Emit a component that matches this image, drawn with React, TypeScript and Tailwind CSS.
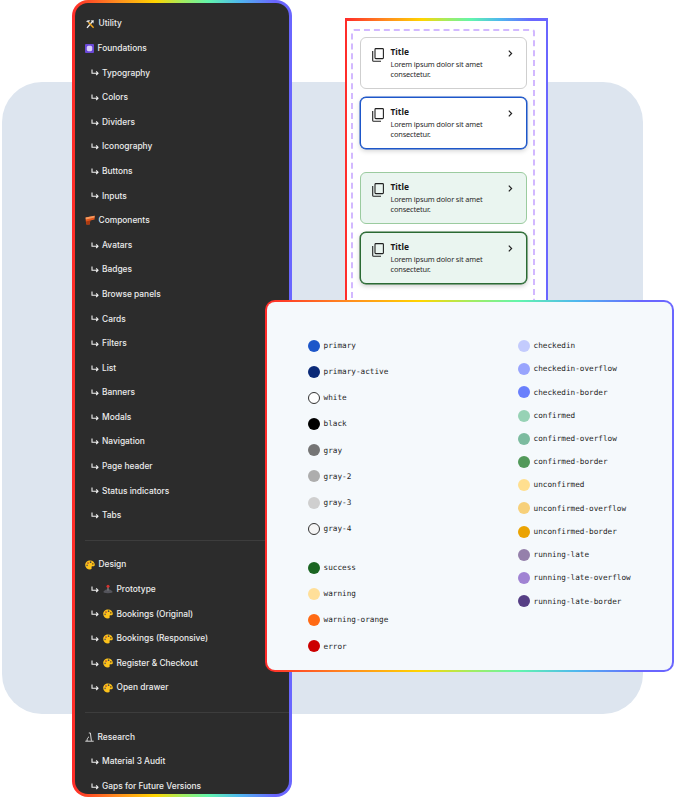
const rainbow = 'bg-[linear-gradient(90deg,#ff2a2a_0%,#ff8a1f_20%,#ffd500_38%,#a5ec5e_50%,#62f5ad_62%,#4fb8ee_76%,#6a66ff_92%,#6a66ff_100%)]';

type Item = { label: string; icon?: 'tools' | 'square' | 'brick' | 'palette' | 'joystick' | 'research'; child?: boolean } | { divider: true };

const items: Item[] = [
  { label: 'Utility', icon: 'tools' },
  { label: 'Foundations', icon: 'square' },
  { label: 'Typography', child: true },
  { label: 'Colors', child: true },
  { label: 'Dividers', child: true },
  { label: 'Iconography', child: true },
  { label: 'Buttons', child: true },
  { label: 'Inputs', child: true },
  { label: 'Components', icon: 'brick' },
  { label: 'Avatars', child: true },
  { label: 'Badges', child: true },
  { label: 'Browse panels', child: true },
  { label: 'Cards', child: true },
  { label: 'Filters', child: true },
  { label: 'List', child: true },
  { label: 'Banners', child: true },
  { label: 'Modals', child: true },
  { label: 'Navigation', child: true },
  { label: 'Page header', child: true },
  { label: 'Status indicators', child: true },
  { label: 'Tabs', child: true },
  { divider: true },
  { label: 'Design', icon: 'palette' },
  { label: 'Prototype', icon: 'joystick', child: true },
  { label: 'Bookings (Original)', icon: 'palette', child: true },
  { label: 'Bookings (Responsive)', icon: 'palette', child: true },
  { label: 'Register & Checkout', icon: 'palette', child: true },
  { label: 'Open drawer', icon: 'palette', child: true },
  { divider: true },
  { label: 'Research', icon: 'research' },
  { label: 'Material 3 Audit', child: true },
  { label: 'Gaps for Future Versions', child: true },
];

const leftColors = [
  { name: 'primary', color: 'bg-[#1d56c9]' },
  { name: 'primary-active', color: 'bg-[#0b2a78]' },
  { name: 'white', color: 'bg-white border border-[#333]' },
  { name: 'black', color: 'bg-black' },
  { name: 'gray', color: 'bg-[#757575]' },
  { name: 'gray-2', color: 'bg-[#adadad]' },
  { name: 'gray-3', color: 'bg-[#cfcfcf]' },
  { name: 'gray-4', color: 'bg-[#f5f5f5] border border-[#333]' },
];

const statusColors = [
  { name: 'success', color: 'bg-[#1b6522]' },
  { name: 'warning', color: 'bg-[#ffdf99]' },
  { name: 'warning-orange', color: 'bg-[#ff6a14]' },
  { name: 'error', color: 'bg-[#cc0000]' },
];

const rightColors = [
  { name: 'checkedin', color: 'bg-[#c3cbfd]' },
  { name: 'checkedin-overflow', color: 'bg-[#98a4fd]' },
  { name: 'checkedin-border', color: 'bg-[#697ffc]' },
  { name: 'confirmed', color: 'bg-[#97d2b5]' },
  { name: 'confirmed-overflow', color: 'bg-[#7cbb9f]' },
  { name: 'confirmed-border', color: 'bg-[#52995a]' },
  { name: 'unconfirmed', color: 'bg-[#ffdf8f]' },
  { name: 'unconfirmed-overflow', color: 'bg-[#f7d07a]' },
  { name: 'unconfirmed-border', color: 'bg-[#eba302]' },
  { name: 'running-late', color: 'bg-[#9580ab]' },
  { name: 'running-late-overflow', color: 'bg-[#a083d3]' },
  { name: 'running-late-border', color: 'bg-[#563f85]' },
];

function Arrow() {
  return (
    <svg width="8" height="7" viewBox="0 0 8 7" fill="none" stroke="#f0f0f0" strokeWidth="1.1" className="shrink-0">
      <path d="M1 0.5V4.2H7M5.2 2.4L7 4.2L5.2 6" />
    </svg>
  );
}

function RowIcon({ type }: { type: string }) {
  if (type === 'tools') {
    return (
      <svg width="10" height="10" viewBox="0 0 10 10" fill="none" className="shrink-0">
        <path d="M2 8.8L7 3" stroke="#f0f0f0" strokeWidth="1.3" />
        <path d="M8.6 8.8L3.4 3.2" stroke="#f2a51c" strokeWidth="1.4" />
        <path d="M1 2.6C2.4 1 4 1 5.2 1.6L3.4 3.6Z" fill="#d9d9d9" />
        <path d="M5.6 1.4L8.8 1.2L8.4 4.4Z" fill="#f4f4f4" />
      </svg>
    );
  }
  if (type === 'square') {
    return (
      <svg width="9" height="9" viewBox="0 0 9 9" className="shrink-0">
        <rect width="9" height="9" rx="1" fill="#6a48d7" />
        <rect x="1.8" y="1.8" width="5.4" height="5.4" rx="1.6" fill="#d9cdfb" />
      </svg>
    );
  }
  if (type === 'brick') {
    return (
      <svg width="10" height="10" viewBox="0 0 10 10" className="shrink-0">
        <path d="M0.6 2.6L9.6 0.8V4.6L5.4 5.6L4.6 9.4H1.4C0.8 7.4 0.6 5 0.6 2.6Z" fill="#e2561d" />
        <path d="M0.6 2.6L9.6 0.8V2.4L0.8 4.4Z" fill="#f59a5e" />
        <path d="M1 6.5L5.2 5.4L4.6 9.4H1.4Z" fill="#a83a12" />
      </svg>
    );
  }
  if (type === 'palette') {
    return (
      <svg width="10" height="10" viewBox="0 0 10 10" className="shrink-0">
        <path d="M5 0.4C7.9 0.4 9.8 2.3 9.8 4.8C9.8 6.2 8.7 6.4 7.7 6.3C6.7 6.2 6.3 6.8 6.6 7.6C7 8.8 6.1 9.7 4.9 9.6C2.3 9.4 0.2 7.5 0.2 5C0.2 2.4 2.3 0.4 5 0.4Z" fill="#fcc21b" />
        <circle cx="3" cy="3" r="0.85" fill="#b5402a" />
        <circle cx="5.6" cy="2.2" r="0.85" fill="#4a4a4a" />
        <circle cx="7.8" cy="3.8" r="0.85" fill="#7c5b16" />
        <circle cx="2.1" cy="5.4" r="0.8" fill="#5a5a5a" />
      </svg>
    );
  }
  if (type === 'joystick') {
    return (
      <svg width="10" height="10" viewBox="0 0 10 10" className="shrink-0">
        <path d="M0.6 7.2L3 5.4H7L9.4 7.2V8.6C7 9.6 3 9.6 0.6 8.6Z" fill="#55555c" />
        <rect x="4.5" y="2.4" width="1" height="4" fill="#999" />
        <circle cx="5" cy="2.2" r="1.5" fill="#d5322f" />
      </svg>
    );
  }
  return (
    <svg width="9" height="10" viewBox="0 0 9 10" fill="none" stroke="#ececec" strokeWidth="0.9" className="shrink-0">
      <path d="M0.3 9.2H8.7M2 9C2 7.2 2.6 5.6 4 4.8M3.8 1H5.4L6.4 8.8" />
    </svg>
  );
}

function Sidebar() {
  return (
    <div className={`absolute left-[72px] top-0 w-[220px] h-[797px] p-[3px] rounded-[16px] ${rainbow}`}>
      <div className="h-full rounded-[13px] bg-[#2c2c2c] pt-[8.4px] pl-[10px] overflow-hidden font-['Inter',sans-serif] text-[8.4px] font-medium text-[#ececec]">
        {items.map((item, i) => {
          if ('divider' in item) {
            return (
              <div key={i} className="h-[24.6px] flex items-center">
                <div className="h-px w-full bg-[#3d3d3d]" />
              </div>
            );
          }
          return (
            <div key={i} className={`h-[24.6px] flex items-center whitespace-nowrap ${item.child ? 'pl-[6px]' : ''}`}>
              {item.child && <Arrow />}
              {item.child && item.icon && <span className="ml-[4px]"><RowIcon type={item.icon} /></span>}
              {!item.child && item.icon && <RowIcon type={item.icon} />}
              <span className={item.child ? (item.icon ? 'ml-[3.5px]' : 'ml-[3px]') : 'ml-[3.5px]'}>
                {item.label}
              </span>
            </div>
          );
        })}
      </div>
    </div>
  );
}

function ListCard({ tone, active, className = '' }: { tone: 'plain' | 'green'; active?: boolean; className?: string }) {
  const style =
    tone === 'plain'
      ? active
        ? 'bg-white border border-[#1d56c9] shadow-[0_0_0_0.5px_#1d56c9,0_2px_5px_rgba(0,0,0,0.18)]'
        : 'bg-white border border-[#cfcfcf]'
      : active
        ? 'bg-[#eaf5f0] border border-[#2a6a33] shadow-[0_0_0_0.5px_#2a6a33,0_2px_5px_rgba(0,0,0,0.22)]'
        : 'bg-[#eaf5f0] border border-[#9bcb9f]';
  return (
    <div className={`h-[52px] rounded-[6px] flex items-start pl-[11px] pr-[13px] pt-[8px] ${style} ${className}`}>
      <svg width="12" height="14" viewBox="0 0 12 14" fill="none" stroke="#222" strokeWidth="1.1" className="shrink-0 mt-[2px]">
        <rect x="3" y="0.6" width="8.4" height="10" rx="0.8" />
        <path d="M0.7 3V12.4C0.7 12.9 1.1 13.3 1.6 13.3H9" />
      </svg>
      <div className="ml-[6.5px] flex-1 font-['Noto_Sans',sans-serif] text-[#1a1a1a]">
        <div className="text-[8.4px] leading-[12px] font-bold">Title</div>
        <div className="text-[7.4px] leading-[10.4px] mt-[1px] tracking-[-0.15px] text-[#2a2a2a]">Lorem ipsum dolor sit amet consectetur.</div>
      </div>
      <svg width="5" height="7" viewBox="0 0 5 7" fill="none" stroke="#222" strokeWidth="1.2" className="shrink-0 mt-[4px]">
        <path d="M0.8 0.6L3.6 3.5L0.8 6.4" />
      </svg>
    </div>
  );
}

function CardsPanel() {
  return (
    <div className={`absolute left-[344.5px] top-[18px] w-[203.5px] h-[290px] p-[2.5px] pb-0 ${rainbow}`}>
      <div className="h-full bg-white pl-[4px] pt-[8.5px] overflow-hidden">
        <div className="w-[184px] h-[300px] rounded-[3px] border-2 border-dashed border-[#d2b8ff] pt-[6px] pl-[7px] pr-[6px]">
          <ListCard tone="plain" />
          <ListCard tone="plain" active className="mt-[8px]" />
          <ListCard tone="green" className="mt-[23px]" />
          <ListCard tone="green" active className="mt-[8px]" />
        </div>
      </div>
    </div>
  );
}

function Swatch({ name, color, rowClass }: { name: string; color: string; rowClass: string }) {
  return (
    <div className={`flex items-center ${rowClass}`}>
      <span className={`w-[12px] h-[12px] rounded-full shrink-0 ${color}`} />
      <span className="ml-[4px] font-['DejaVu_Sans_Mono',monospace] text-[7.7px] text-[#1f1f1f]">{name}</span>
    </div>
  );
}

function ColorsPanel() {
  return (
    <div className={`absolute left-[264.5px] top-[300px] w-[409.5px] h-[371.5px] p-[2px] rounded-[10px] ${rainbow}`}>
      <div className="h-full rounded-[8px] bg-[#f5f9fc] flex pt-[30.7px] pl-[41px]">
        <div className="w-[210px]">
          {leftColors.map((c) => (
            <Swatch key={c.name} {...c} rowClass="h-[26.15px]" />
          ))}
          <div className="h-[13px]" />
          {statusColors.map((c) => (
            <Swatch key={c.name} {...c} rowClass="h-[26.15px]" />
          ))}
        </div>
        <div className="pt-[1.6px]">
          {rightColors.map((c) => (
            <Swatch key={c.name} {...c} rowClass="h-[23.23px]" />
          ))}
        </div>
      </div>
    </div>
  );
}

export default function App() {
  return (
    <div className="relative w-[674px] h-[799px] bg-white overflow-hidden">
      <div className="absolute left-[2px] top-[82px] w-[641px] h-[632px] rounded-[40px] bg-[#dde5ef]" />
      <Sidebar />
      <CardsPanel />
      <ColorsPanel />
    </div>
  );
}
